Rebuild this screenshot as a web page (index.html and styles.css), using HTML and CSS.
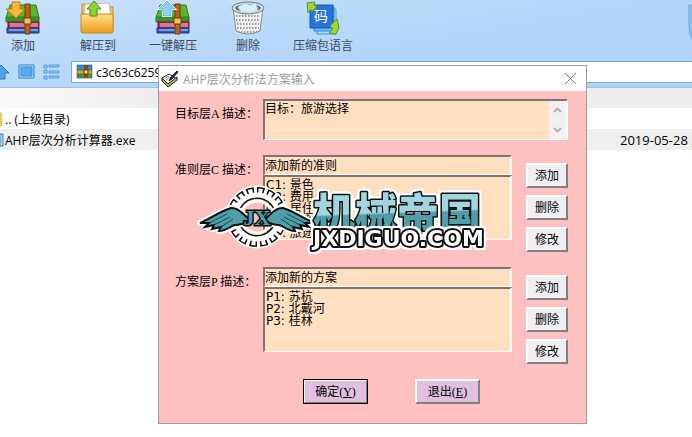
FILE: index.html
```html
<!DOCTYPE html>
<html lang="zh-CN">
<head>
    <meta charset="UTF-8">
    <meta name="viewport" content="width=device-width, initial-scale=1.0">
    <title>AHP层次分析法方案输入</title>
    <link rel="stylesheet" href="styles.css">
</head>
<body>
    <header class="top">
        <div class="toolbar">
            <button class="tool">
                <svg width="36" height="36" viewBox="0 0 36 36">
                    <use href="#books"/>
                    <path d="M7 2h8v7h5L11 18 1 9h6z" fill="#fbb53a" stroke="#c87a10"/>
                </svg>
                添加
            </button>
            <button class="tool">
                <svg width="36" height="36" viewBox="0 0 36 36">
                    <path d="M2 4h11l2 3h18v24H2z" fill="#f5c457" stroke="#c98a1c"/>
                    <path d="M5 4l24-1 2 14H4z" fill="#fff" stroke="#bbb"/>
                    <path d="M1 14h32v17q0 2-2 2H3q-2 0-2-2z" fill="url(#gold)" stroke="#c98a1c"/>
                    <path d="M14 1l7 8h-4v7h-7V9H7z" fill="#8fd32a" stroke="#4d8f12"/>
                </svg>
                解压到
            </button>
            <button class="tool">
                <svg width="36" height="36" viewBox="0 0 36 36">
                    <use href="#books"/>
                    <path d="M12 1l8 8h-4v7H8V9H4z" fill="#8fd0fa" stroke="#fff" stroke-width="2"/>
                    <path d="M12 1l8 8h-4v7H8V9H4z" fill="#8fd0fa" stroke="#4a9bd6" stroke-width=".6"/>
                </svg>
                一键解压
            </button>
            <button class="tool">
                <svg width="36" height="36" viewBox="0 0 36 36">
                    <path d="M3 8l3 23q12 6 24 0l3-23z" fill="#f2f2f2" stroke="#888"/>
                    <path d="M6 16h24M6 20h24M7 24h22M7 28h22M8 32h20" stroke="#999" stroke-width="2" stroke-dasharray="1.5 1.5"/>
                    <ellipse cx="18" cy="8" rx="16" ry="6" fill="#ddd" stroke="#777"/>
                    <ellipse cx="18" cy="8" rx="13" ry="4" fill="#6e7c88"/>
                    <path d="M8 7l7-4 5 2 6-2 2 8-8 2-9-1z" fill="#d8edfb" stroke="#8fbfe0" stroke-width=".6"/>
                </svg>
                删除
            </button>
            <button class="tool">
                <svg width="36" height="36" viewBox="0 0 36 36">
                    <path d="M12 9h19v25H12z" fill="#a6dcfa" stroke="#3a9be0"/>
                    <path d="M9 7h20v24H9z" fill="#6fc0f5" stroke="#2b86d8"/>
                    <path d="M5 5h23v23H5z" fill="#2673dc" stroke="#1558b8"/>
                    <text class="code" x="9" y="21">码</text>
                    <path d="M2 3l8-1-1 3 3 1-4 5-3-1-2 3z" fill="#a2d534" stroke="#5b9817"/>
                    <path d="M25 26l7-7 2 9-3 6-7-1 4-4z" fill="#a2d534" stroke="#5b9817"/>
                </svg>
                压缩包语言
            </button>
        </div>
        <div class="address">
            <div class="nav">
                <svg width="18" height="16" viewBox="0 0 18 16">
                    <path d="M8 1l8 8h-4v6H4V9H0z" fill="#4e9fe6" stroke="#2a78c2"/>
                </svg>
                <svg width="18" height="16" viewBox="0 0 18 16">
                    <path d="M1 1h15v13H1z" fill="#b5dcfb" stroke="#2f80c8"/>
                    <path d="M3 3h11v9H3z" fill="#5baaf0" stroke="#3c8ad4"/>
                </svg>
                <svg width="18" height="16" viewBox="0 0 18 16">
                    <path d="M1 1h3v3H1zM1 6h3v3H1zM1 12h3v3H1zM6 1h10v2H6zM6 7h10v2H6zM6 12h10v2H6z" fill="#9ccdf8" stroke="#3c8ad4" stroke-width=".8"/>
                </svg>
            </div>
            <label class="path">
                <svg width="18" height="16" viewBox="0 0 18 16">
                    <path d="M1 1h15v5H1z" fill="#2d8fce"/>
                    <path d="M1 6h15v4H1z" fill="#d9a51c"/>
                    <path d="M1 10h15v4H1z" fill="#3f9a34"/>
                    <path d="M1 1h15v13H1zM1 6h15M1 10h15" fill="none" stroke="#456" stroke-width=".6"/>
                    <path d="M8 1h4v13H8z" fill="#8a4618"/>
                    <path d="M8 6h4v4H8z" fill="#f2dc9a" stroke="#6a3a10"/>
                </svg>
                <input type="text" aria-label="路径" value="c3c63c6259">
            </label>
        </div>
        <svg class="shield" width="4" height="36" viewBox="0 0 4 36">
            <path d="M4 1H1v20q0 9 3 14" fill="#8dbce6" stroke="#6fa3d3"/>
        </svg>
    </header>

    <main class="files">
        <div class="files-head"></div>
        <div class="file">
            <svg width="4" height="16" viewBox="0 0 4 16"><path d="M0 1l2 2v12H0z" fill="#f7d774" stroke="#d9ab3a" stroke-width=".6"/></svg>
            <span>.. (上级目录)</span>
        </div>
        <div class="file selected">
            <svg width="4" height="16" viewBox="0 0 4 16"><path d="M0 2h3v12H0z" fill="#a9d3f2" stroke="#3d86c0"/></svg>
            <span>AHP层次分析计算器.exe</span>
            <time>2019-05-28 2</time>
        </div>
    </main>

    <form class="dialog" role="dialog" aria-labelledby="title">
        <div class="titlebar">
            <svg width="18" height="18" viewBox="0 0 18 18">
                <path d="M1 8l7-4 8 5-9 7z" fill="#fff" stroke="#222"/>
                <path d="M1 8v3l6 6 9-7V7l-9 7z" fill="#c9bd55" stroke="#111"/>
                <path d="M4 8l4-2M5 10l4-3" stroke="#888"/>
                <path d="M16 1l-6 6-2 4 3-2 6-7z" fill="#23267a" stroke="#000" stroke-width=".8"/>
            </svg>
            <span id="title">AHP层次分析法方案输入</span>
            <button type="button" class="close" aria-label="关闭">
                <svg width="11" height="11" viewBox="0 0 11 11"><path d="M0 0l11 11M11 0L0 11" stroke="#777"/></svg>
            </button>
        </div>
        <div class="dialog-body">
            <div class="group">
                <label for="goal">目标层<span class="latin">A </span>描述：</label>
                <div class="goal">
                    <textarea id="goal">目标：旅游选择</textarea>
                    <div class="scroll">
                        <svg width="9" height="6" viewBox="0 0 9 6"><path d="M1 5l3.500-3.500L8 5" fill="none" stroke="#b4b4b4" stroke-width="2"/></svg>
                        <svg width="9" height="6" viewBox="0 0 9 6"><path d="M1 1l3.500 3.500L8 1" fill="none" stroke="#b4b4b4" stroke-width="2"/></svg>
                    </div>
                </div>
            </div>
            <div class="group">
                <label for="rule">准则层<span class="latin">C </span>描述：</label>
                <div class="fields">
                    <input type="text" id="rule" value="添加新的准则">
                    <select size="5" aria-label="准则">
                        <option>C1: 景色</option>
                        <option>C2: 费用</option>
                        <option>C3: 居住</option>
                        <option>C4: 饮食</option>
                        <option>C5: 旅途</option>
                    </select>
                </div>
                <div class="actions">
                    <button type="button">添加</button>
                    <button type="button">删除</button>
                    <button type="button">修改</button>
                </div>
            </div>
            <div class="group">
                <label for="plan">方案层<span class="latin">P </span>描述：</label>
                <div class="fields">
                    <input type="text" id="plan" value="添加新的方案">
                    <select size="5" aria-label="方案">
                        <option>P1: 苏杭</option>
                        <option>P2: 北戴河</option>
                        <option>P3: 桂林</option>
                    </select>
                </div>
                <div class="actions">
                    <button type="button">添加</button>
                    <button type="button">删除</button>
                    <button type="button">修改</button>
                </div>
            </div>
            <div class="confirm">
                <button type="button" class="ok">确定<span class="latin">(<u>Y</u>)</span></button>
                <button type="button">退出<span class="latin">(<u>E</u>)</span></button>
            </div>
        </div>
    </form>

    <svg class="watermark" width="300" height="72" viewBox="0 0 300 72">
        <g transform="translate(60 34)" fill="none">
            <circle r="25" stroke="#fff" stroke-width="13"/>
            <circle r="26" stroke="#111" stroke-width="8" pathLength="160" stroke-dasharray="7 3"/>
            <circle r="21" stroke="#111" stroke-width="6"/>
            <circle r="26" stroke="#fff" stroke-width="5" pathLength="160" stroke-dasharray="4 6" stroke-dashoffset="-1.5"/>
            <circle r="22" stroke="#fff" stroke-width="5"/>
            <circle r="16" stroke="#fff" stroke-width="3"/>
            <g id="wing">
                <path d="M-10 0C-14-2-18-10-26-9-36-6-46 1-57 6l9 0-4 4 9-2-2 4 9-2-2 4C-30 14-27 9-22 8-16 8-12 6-8 4z" stroke="#fff" stroke-width="6" stroke-linejoin="round"/>
                <path d="M-10 0C-14-2-18-10-26-9-36-6-46 1-57 6l9 0-4 4 9-2-2 4 9-2-2 4C-30 14-27 9-22 8-16 8-12 6-8 4z" fill="#4f9faa" stroke="#111" stroke-width="2"/>
                <path d="M-48 6l18-9M-43 8l16-8M-36 10l12-8" stroke="#18464e"/>
            </g>
            <use href="#wing" transform="scale(-1 1)"/>
            <text class="jx" x="0" y="8">JX</text>
        </g>
        <text class="brand" x="116" y="46">机械帝国</text>
        <text class="site" x="116" y="63">JXDIGUO.COM</text>
    </svg>

    <!-- shapes shared by the icons -->
    <svg class="defs" width="0" height="0">
        <defs>
            <linearGradient id="gold" x2="0" y2="1">
                <stop offset="0" stop-color="#ffe08a"/>
                <stop offset="1" stop-color="#f09a1a"/>
            </linearGradient>
            <linearGradient id="teal" x2=".1" y2="1">
                <stop offset=".57" stop-color="#a3d5de"/>
                <stop offset=".6" stop-color="#4f9faa"/>
            </linearGradient>
            <g id="books">
                <path d="M5 5h26l3 13H1z" fill="#5cb531" stroke="#357a1a"/>
                <path d="M1 17h33v5H1z" fill="#3c9427" stroke="#357a1a"/>
                <path d="M3 22h31v6H3z" fill="#b32c52" stroke="#7d1734"/>
                <path d="M5 24h28M5 26h28" stroke="#f4cbd5"/>
                <path d="M2 28h32v5H2z" fill="#3456b8" stroke="#1d3382"/>
                <path d="M4 30h29" stroke="#cfdcf8"/>
                <path d="M20 4h5v30h-5z" fill="#b5651d" stroke="#6f3a0c"/>
                <path d="M19 18h7v6h-7z" fill="#f0c75a" stroke="#6f3a0c"/>
            </g>
        </defs>
    </svg>
</body>
</html>
```

FILE: styles.css
```css
body {
    margin: 0;
    min-height: 100vh;
    overflow: hidden;
    background-color: #fff;
    color: #000;
    font-family: "Open Sans", "Noto Sans CJK SC", sans-serif;
    font-size: 12px;
}

button, input, select, textarea {
    box-sizing: border-box;
    margin: 0;
    padding: 0;
    border: none;
    background: none;
    border-radius: 0;
    color: inherit;
    font: inherit;
}

svg {
    flex: none;
}

/* archive window */
.top {
    position: relative;
    background: linear-gradient(170deg, #c9e2fb 0, #b0d4fa 60%, #b0d4fa 100%);
    border-bottom: 1px solid #a9bfd6;
}

.toolbar {
    display: flex;
    gap: 15px;
    height: 61px;
    margin-left: -7px;
}

.tool {
    display: flex;
    flex-direction: column;
    align-items: center;
    width: 60px;
    color: #3c4a5c;
    line-height: 20px;
    white-space: nowrap;
}

.code {
    fill: #fff;
    font-size: 14px;
}

.address {
    display: flex;
    padding-bottom: 4px;
}

.nav {
    display: flex;
    align-items: center;
    gap: 7px;
    width: 78px;
    margin-left: -7px;
}

.path {
    display: flex;
    flex: 1;
    align-items: center;
    gap: 2px;
    padding-left: 4px;
    border: 1px solid #7da7d9;
    border-right: none;
    background-color: #fff;
}

.path input {
    flex: 1;
    height: 20px;
}

.shield {
    position: absolute;
    top: 4px;
    right: 0;
}

.files-head {
    height: 20px;
    background: linear-gradient(90deg, #fafafa, #eee 160px);
}

.file {
    display: flex;
    align-items: center;
    gap: 1px;
    height: 21px;
}

.file.selected {
    background-color: #efefef;
}

.file time {
    width: 72px;
    margin-left: auto;
    font-size: 13px;
    white-space: nowrap;
}

/* dialog */
.dialog {
    position: absolute;
    top: 65px;
    left: 158px;
    border: 1px solid #a39a9e;
    background-color: #ffc0c0;
    font-family: "Noto Sans CJK SC", sans-serif;
}

.titlebar {
    display: flex;
    align-items: center;
    gap: 4px;
    height: 25px;
    padding: 0 10px 0 2px;
    background-color: #fff;
    color: #999;
    font-family: "Open Sans", "Noto Sans CJK SC", sans-serif;
}

.close {
    display: flex;
    margin-left: auto;
}

.dialog-body {
    display: flex;
    flex-direction: column;
    gap: 15px;
    padding: 8px 18px 19px 16px;
}

.group {
    display: flex;
}

.group label {
    width: 88px;
    padding-top: 5px;
    line-height: 18px;
    white-space: nowrap;
}

.latin {
    font-family: "Liberation Serif", serif;
    white-space: pre;
}

.goal,
.fields input,
.fields select {
    border: 2px solid;
    border-width: 2px 2px 1px 2px;
    border-color: #777 #fff #fff #777;
    background-color: #ffdfc0;
}

.goal {
    display: flex;
    box-sizing: border-box;
    width: 305px;
    height: 41px;
}

.goal textarea {
    flex: 1;
    line-height: 14px;
    resize: none;
}

.scroll {
    display: flex;
    flex-direction: column;
    align-items: center;
    justify-content: space-between;
    width: 17px;
    padding: 6px 0;
    background-color: #f0f0f0;
}

.fields {
    display: flex;
    flex-direction: column;
    width: 249px;
}

.fields input {
    height: 20px;
    padding-bottom: 3px;
}

.fields select {
    height: 65px;
    overflow: hidden;
    font-family: "DejaVu Sans", "Noto Sans CJK SC", sans-serif;
}

.fields option {
    display: flex;
    align-items: center;
    height: 12px;
    min-height: 12px;
    padding: 0 1px;
}

.actions {
    display: flex;
    flex-direction: column;
    gap: 7px;
    margin-left: 14px;
    padding-top: 8px;
}

.actions button,
.confirm button {
    width: 42px;
    height: 25px;
    padding-bottom: 2px;
    border: 2px solid;
    border-color: #fff #808080 #808080 #fff;
    background-color: #f0f0f0;
}

.confirm {
    display: flex;
    gap: 47px;
    padding-left: 128px;
}

.confirm button {
    width: 65px;
    background-color: #dfc0df;
}

.confirm .ok {
    outline: 1px solid #000;
    outline-offset: -1px;
}

/* site mark */
.watermark {
    position: absolute;
    top: 183px;
    left: 197px;
}

.jx {
    fill: #4f9faa;
    stroke: #111;
    stroke-width: 3px;
    paint-order: stroke;
    font: bold 22px "Liberation Serif", serif;
    text-anchor: middle;
}

.brand,
.site {
    stroke: #111;
    stroke-linejoin: round;
    paint-order: stroke;
    filter: drop-shadow(2px 0 0 #fff) drop-shadow(-2px 0 0 #fff) drop-shadow(0 2px 0 #fff) drop-shadow(0 -2px 0 #fff);
}

.brand {
    fill: url(#teal);
    stroke-width: 3px;
    font: 900 42px "Noto Sans CJK SC", sans-serif;
}

.site {
    fill: #fff;
    stroke-width: 4px;
    font: bold 22px "DejaVu Sans", sans-serif;
}

.defs {
    position: absolute;
}
```
